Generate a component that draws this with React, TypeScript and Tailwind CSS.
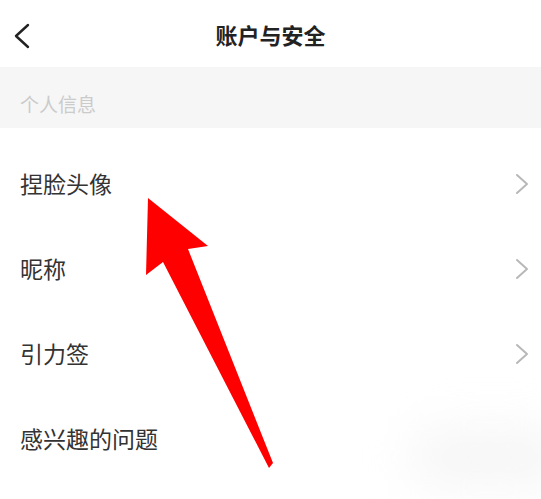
import React from "react";

const rows = [
  { label: "捏脸头像", arrow: true },
  { label: "昵称", arrow: true },
  { label: "引力签", arrow: true },
  { label: "感兴趣的问题", arrow: false },
];

const font = { fontFamily: '"Noto Sans CJK SC", "Noto Sans", sans-serif' };

export default function App() {
  return (
    <div className="relative w-[541px] h-[499px] overflow-hidden bg-white" style={font}>
      <header className="relative h-[67px] flex items-center justify-center">
        <svg className="absolute left-[13px] top-[23px]" width="18" height="26" viewBox="0 0 18 26">
          <polyline points="15,2 3,13 15,24" fill="none" stroke="#222" strokeWidth="2.4" strokeLinecap="round" strokeLinejoin="round" />
        </svg>
        <h1 className="text-[22px] font-semibold text-[#222] leading-none">账户与安全</h1>
      </header>

      <div className="h-[61px] bg-[#f6f6f6] pl-5 pt-[11px] flex items-center">
        <span className="text-[19px] text-[#cbcbcb] leading-none">个人信息</span>
      </div>

      <ul className="pt-[13px]">
        {rows.map((row) => (
          <li key={row.label} className="h-[85px] pl-5 pr-[12px] flex items-center justify-between">
            <span className="text-[23px] text-[#333] leading-none">{row.label}</span>
            {row.arrow && (
              <svg width="14" height="22" viewBox="0 0 14 22">
                <polyline points="2,2 12,11 2,20" fill="none" stroke="#b8b8b8" strokeWidth="2" strokeLinecap="round" strokeLinejoin="round" />
              </svg>
            )}
          </li>
        ))}
      </ul>

      {/* soft smudge bottom right */}
      <div className="absolute left-[410px] top-[430px] w-[160px] h-[55px] rounded-full bg-[#ececec] blur-xl opacity-50" />

      {/* red annotation arrow */}
      <svg className="absolute left-0 top-0 pointer-events-none" width="541" height="499" viewBox="0 0 541 499">
        <polygon
          points="148,198 208,246 188,249 273,463 269,468 163,262 146,275"
          fill="#ff0000"
          strokeLinejoin="round"
        />
      </svg>
    </div>
  );
}
